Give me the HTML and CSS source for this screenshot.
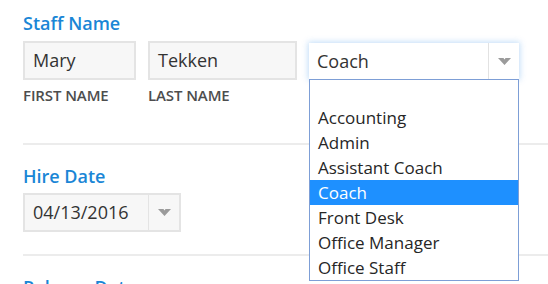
FILE: index.html
```html
<!DOCTYPE html>
<html>
<head>
<meta charset="utf-8">
<link rel="stylesheet" href="styles.css">
</head>
<body>
<div class="form">
  <section class="field">
    <h2 class="field-title">Staff Name</h2>
    <div class="name-row">
      <div class="name-col">
        <div class="text-input w-first">Mary</div>
        <div class="sub-label">FIRST NAME</div>
      </div>
      <div class="name-col">
        <div class="text-input w-last">Tekken</div>
        <div class="sub-label">LAST NAME</div>
      </div>
      <div class="select-wrap">
        <div class="select">
          <span class="select-value">Coach</span>
          <span class="select-btn"><svg class="arrow" width="13" height="7" viewBox="0 0 13 7"><polygon points="0,0 5.5,0 6.5,1.5 7.5,0 13,0 6.5,7" fill="#9b9b9b"/></svg></span>
        </div>
        <ul class="select-list">
          <li class="opt">&nbsp;</li>
          <li class="opt">Accounting</li>
          <li class="opt">Admin</li>
          <li class="opt">Assistant Coach</li>
          <li class="opt selected">Coach</li>
          <li class="opt">Front Desk</li>
          <li class="opt">Office Manager</li>
          <li class="opt">Office Staff</li>
        </ul>
      </div>
    </div>
  </section>
  <div class="divider divider-name"></div>
  <section class="field">
    <h2 class="field-title spaced">Hire Date</h2>
    <div class="date-input">
      <span class="date-value">04/13/2016</span>
      <span class="date-btn"><svg class="arrow" width="13" height="7" viewBox="0 0 13 7"><polygon points="0,0 5.5,0 6.5,1.5 7.5,0 13,0 6.5,7" fill="#9b9b9b"/></svg></span>
    </div>
  </section>
  <div class="divider"></div>
  <section class="field">
    <h2 class="field-title spaced">Release Date</h2>
  </section>
</div>
</body>
</html>
```

FILE: styles.css
```css
html, body {
  margin: 0;
  padding: 0;
  background: #ffffff;
  overflow: hidden;
}
body {
  font-family: "Open Sans", "Liberation Sans", sans-serif;
  color: #333333;
  width: 548px;
  height: 284px;
}
.form {
  padding: 13px 0 0 23px;
}
.field-title {
  margin: 0 0 8px 0;
  font-size: 18px;
  line-height: 20px;
  font-weight: 600;
  color: #1a86d6;
  white-space: nowrap;
}
.field-title.spaced {
  margin-top: 21px;
  margin-bottom: 7px;
}
.name-row {
  display: flex;
  gap: 12px;
  align-items: flex-start;
}
.name-col {
  display: flex;
  flex-direction: column;
}
.text-input {
  box-sizing: border-box;
  height: 39px;
  border: 2px solid #e4e4e4;
  background: #f7f7f7;
  padding: 0 8px;
  font-size: 18px;
  line-height: 35px;
  color: #333333;
}
.w-first { width: 113px; }
.w-last { width: 149px; }
.sub-label {
  margin-top: 6px;
  font-size: 15px;
  line-height: 18px;
  font-weight: 600;
  color: #4d4d4d;
  letter-spacing: -0.1px;
}
.select-wrap {
  position: relative;
  margin-top: 2px;
  width: 210px;
}
.select {
  box-sizing: border-box;
  display: flex;
  height: 36px;
  background: #ffffff;
  box-shadow: 0 0 6px 1px rgba(120, 180, 240, 0.45);
}
.select-value {
  flex: 1;
  padding-left: 8px;
  font-size: 18px;
  line-height: 36px;
  color: #333333;
}
.select-btn, .date-btn {
  box-sizing: border-box;
  width: 31px;
  border-left: 1px solid #e2e2e2;
  display: flex;
  align-items: center;
  justify-content: center;
}
.select-list {
  position: absolute;
  top: 100%;
  left: 0;
  box-sizing: border-box;
  width: 210px;
  margin: 0;
  padding: 0;
  list-style: none;
  background: #ffffff;
  border: 1px solid #7d9ed6;
  z-index: 2;
}
.opt {
  height: 25px;
  line-height: 25px;
  padding-left: 8px;
  font-size: 17px;
  color: #262626;
  white-space: nowrap;
}
.opt.selected {
  background: #1e90ff;
  color: #ffffff;
}
.divider {
  height: 2px;
  background: #ececec;
}
.divider-name {
  margin-top: 39px;
}
.date-input {
  box-sizing: border-box;
  display: flex;
  width: 158px;
  height: 39px;
  border: 2px solid #e4e4e4;
  background: #f7f7f7;
  margin-bottom: 22px;
}
.date-value {
  flex: 1;
  padding-left: 8px;
  font-size: 18px;
  line-height: 35px;
  color: #333333;
}
.date-btn {
  border-left-color: #e4e4e4;
}
```
